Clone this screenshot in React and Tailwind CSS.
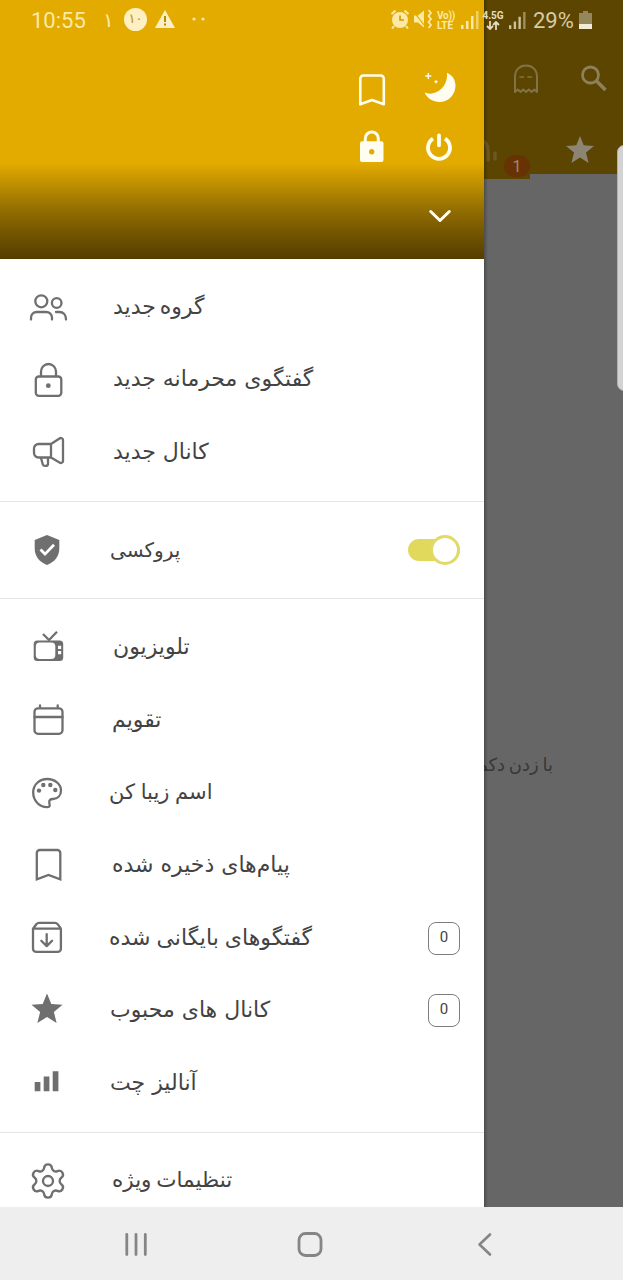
import React from "react";
import { Settings } from "lucide-react";

const STAR = "M19 2.500l4.300 10.400 11.200.8-8.600 7.300 2.700 10.900-9.600-5.900-9.600 5.900 2.700-10.900-8.600-7.300 11.200-.8z";

// All menu icons share the same 40x40 box
function Icon({ children, className = "", strokeWidth = 2.3 }) {
  return (
    <svg
      viewBox="0 0 40 40"
      className={`w-10 h-10 shrink-0 ${className}`}
      fill="none"
      stroke="currentColor"
      strokeWidth={strokeWidth}
      strokeLinecap="round"
      strokeLinejoin="round"
    >
      {children}
    </svg>
  );
}

const icons = {
  group: (
    <Icon>
      <circle cx="13.300" cy="14.300" r="6" />
      <circle cx="28.700" cy="16" r="4.800" />
      <path d="M3 32.500v-1.500c0-3.500 2.500-6 6-6h9c3.500 0 6 2.500 6 6v1.500M28 25h3.500c3.800 0 6.500 2.800 6.500 7.500" />
    </Icon>
  ),
  lock: (
    <Icon>
      <rect x="7.800" y="16.500" width="25.500" height="19.300" rx="3" />
      <path d="M13 16v-4.500a7.500 7.500 0 0 1 15 0V16" />
      <circle cx="20.300" cy="25.700" r="2.400" fill="currentColor" stroke="none" />
    </Icon>
  ),
  channel: (
    <Icon>
      <path d="M23 12H10.500a4.500 4.500 0 0 0-4.500 4.500v4.500a4.500 4.500 0 0 0 4.500 4.500H23zM23 12l8.500-5.500c1.500-1 3.500-.3 3.500 1.500v21c0 1.800-2 2.500-3.500 1.500L23 25.500M13 26l1.800 6.500c.6 2 4.900 2 5.200-.5V26" />
    </Icon>
  ),
  proxy: (
    <Icon>
      <path d="M19 5l12.300 5v8.500c0 8-5 13.700-12.300 16.500-7.300-2.800-12.300-8.500-12.300-16.500V10z" fill="currentColor" stroke="none" />
      <path d="M12.500 19.600l4.500 4.500 9-9.300" stroke="#fff" strokeWidth="2.800" strokeLinecap="butt" strokeLinejoin="miter" />
    </Icon>
  ),
  tv: (
    <Icon>
      <rect x="5.700" y="12.500" width="29.500" height="20.500" rx="3.500" fill="currentColor" stroke="none" />
      <rect x="7.800" y="14.500" width="19.500" height="16.500" rx="4" fill="#fff" stroke="none" />
      <path d="M15 6l6 6 8-8.300" strokeLinecap="butt" />
      <path d="M30 17.800h3.200v3.200H30zM30 23h3.200v3.200H30z" fill="#fff" stroke="none" />
    </Icon>
  ),
  calendar: (
    <Icon>
      <rect x="6.500" y="8.300" width="28" height="25.500" rx="3.500" />
      <path d="M6.500 17h28M12 7.500V5.500M29.700 7.500V5.500" />
    </Icon>
  ),
  palette: (
    <Icon>
      <path d="M21.300 33.500c-.4.500-1.300.7-2.300.7C11 34 5.200 27.300 5.200 19.500 5.200 11.500 11.500 6 19.300 6c7.500 0 13.700 5 13.700 11.500 0 5.500-3.500 8.300-8 8.500-2.800.1-4 1.200-3.700 3.500.2 1.500.8 3 0 4z" />
      <g fill="currentColor" stroke="none">
        <circle cx="11" cy="17.600" r="2.200" />
        <circle cx="15.300" cy="12" r="2.200" />
        <circle cx="22.300" cy="12" r="2.200" />
        <circle cx="27.300" cy="17" r="2.200" />
      </g>
    </Icon>
  ),
  bookmark: (
    <Icon>
      <path d="M8.800 34.300V8a3 3 0 0 1 3-3h17.500a3 3 0 0 1 3 3v26.300L20.500 30z" strokeLinejoin="miter" />
    </Icon>
  ),
  archive: (
    <Icon>
      <path d="M5 10.700v20a3.200 3.200 0 0 0 3.200 3.200h21.500a3.200 3.200 0 0 0 3.200-3.200v-20zM5 10.700l3.300-4.500c.8-1 1.500-1.400 2.700-1.400h16c1.200 0 1.900.4 2.700 1.400l3.200 4.500M18.700 16.200v11.500M13.300 22.700l5.400 5.400 5.400-5.400" />
    </Icon>
  ),
  star: (
    <Icon>
      <path d={STAR} fill="currentColor" stroke="none" />
    </Icon>
  ),
  stats: (
    <Icon>
      <path d="M6.700 19h5.700v9.300H6.700zM15.700 13.600h5.700v14.700h-5.700zM24.700 8.300h5.700v20h-5.700z" fill="currentColor" stroke="none" />
    </Icon>
  ),
  settings: <Settings size={40} strokeWidth={1.4} className="shrink-0" />,
};

const groups = [
  [
    { icon: "group", label: "گروه جدید", text: "ml-[45px] text-[22px] [word-spacing:-3px]" },
    { icon: "lock", label: "گفتگوی محرمانه جدید", text: "ml-[45px] text-[22px]" },
    { icon: "channel", label: "کانال جدید", text: "ml-[45px] text-[22px]" },
  ],
  [{ icon: "proxy", label: "پروکسی", text: "ml-[42px] text-[20px]", toggle: true }],
  [
    { icon: "tv", label: "تلویزیون", text: "ml-[45px] text-[22px]" },
    { icon: "calendar", label: "تقویم", text: "ml-[44px] text-[22px]" },
    { icon: "palette", label: "اسم زیبا کن", text: "ml-[41px] text-[21px] [word-spacing:-1px]" },
    { icon: "bookmark", label: "پیام‌های ذخیره شده", text: "ml-[44px] text-[22px]" },
    { icon: "archive", label: "گفتگوهای بایگانی شده", text: "ml-[41px] text-[22px] [word-spacing:-1px]", count: 0 },
    { icon: "star", label: "کانال های محبوب", text: "ml-[42px] text-[22px]", count: 0 },
    { icon: "stats", label: "آنالیز چت", text: "ml-[42px] text-[22px]" },
  ],
  [{ icon: "settings", label: "تنظیمات ویژه", text: "ml-[44px] text-[21.5px] [word-spacing:-2px]" }],
];

function MenuRow({ item }) {
  return (
    <div className="h-[72.6px] shrink-0 flex items-center pl-7 pr-6 text-[#6f6f6f]">
      {icons[item.icon]}
      <span dir="rtl" className={`leading-8 pb-px text-[#434343] whitespace-nowrap ${item.text}`}>
        {item.label}
      </span>
      {item.toggle && (
        <div className="ml-auto w-[52px] h-[22px] flex items-center justify-end rounded-full bg-[#e1d95c]">
          <div className="w-[30px] h-[30px] shrink-0 rounded-full bg-white border-3 border-[#e1da66]" />
        </div>
      )}
      {item.count !== undefined && (
        <div className="ml-auto w-8 h-[33px] pb-0.5 rounded-lg border-[1.5px] border-[#7d7d7d] flex items-center justify-center font-[Roboto] text-[15px] text-[#444]">
          {item.count}
        </div>
      )}
    </div>
  );
}

function DrawerHeader() {
  return (
    <div className="h-[259px] shrink-0 pt-[70px] pr-[25px] flex flex-col items-end text-[#fffdf0] bg-linear-to-b from-[#e3ab00] from-[63%] via-[#8f6b00] via-[82%] to-[#543d00]">
      <div className="grid grid-cols-2 gap-x-[27px] gap-y-[17px]">
        <Icon strokeWidth="2.600">
          <path d="M8.300 34.300V8.500a3 3 0 0 1 3-3h17.500a3 3 0 0 1 3 3v25.800L20 30z" />
        </Icon>
        <Icon>
          <path d="M28 2.700c5.200 2.300 8.500 7 8.500 12.800 0 9-7 16.500-16 16.500-6.500 0-12-3.500-15-9.500 2.500 1 5 1.500 7.500 1 10-1.700 16-11 15-20.800z" fill="currentColor" stroke="none" />
          <path d="M9.300 3.500v5M6.800 6h5M17 10.700v2M16 11.700h2" strokeWidth="1.400" />
        </Icon>
        <Icon strokeWidth="3">
          <path d="M13.300 15v-3.500a6.500 6.500 0 0 1 13 0V15" />
          <path fillRule="evenodd" d="M10 14.300h19.500a2 2 0 0 1 2 2V33a2 2 0 0 1-2 2H10a2 2 0 0 1-2-2V16.300a2 2 0 0 1 2-2zM19.700 22a2.800 2.800 0 1 0 .01 0z" fill="currentColor" stroke="none" />
        </Icon>
        <Icon strokeWidth="3.800">
          <path d="M14 11.600a11 11 0 1 0 12 0" strokeLinecap="butt" />
          <path d="M20 8.300v10" />
        </Icon>
      </div>
      <Icon className="mt-7" strokeWidth="3">
        <path d="M11.700 16.500l9.300 9 9.300-9" />
      </Icon>
    </div>
  );
}

function Drawer() {
  return (
    <aside className="w-[484px] h-full shrink-0 flex flex-col bg-white overflow-hidden">
      <DrawerHeader />
      {groups.map((group, i) => (
        <div key={i} className={`py-3 shrink-0 ${i > 0 ? "border-t border-[#e6e6e6]" : ""}`}>
          {group.map((item) => (
            <MenuRow key={item.label} item={item} />
          ))}
        </div>
      ))}
    </aside>
  );
}

// Dimmed chat list behind the drawer
function Backdrop() {
  return (
    <main className="relative flex-1 h-full overflow-hidden bg-[#666] flex flex-col">
      <div className="h-[174px] shrink-0 bg-[#5b4500] pt-[59px] text-[#827347]">
        <div className="flex pl-[22px] gap-[29px]">
          <Icon strokeWidth="2">
            <path d="M9 33V18c0-7 4.500-11.500 11-11.500S31 11 31 18v15l-2.700-2.500-2.800 2.500-2.700-2.500L20 33l-2.800-2.500-2.700 2.500-2.700-2.500z" />
            <path d="M14 18h3.500M22 18h3.500" strokeWidth="1.600" />
          </Icon>
          <Icon strokeWidth="2.800" className="text-[#8d805a]">
            <circle cx="15.500" cy="16" r="8" />
            <path d="M21.500 22l9 9" strokeWidth="3.500" strokeLinecap="butt" />
          </Icon>
        </div>
        <div className="flex items-center mt-[31px]">
          <svg viewBox="0 0 14 40" className="w-[14px] h-10" stroke="#6b5823" strokeWidth="3.500" strokeLinecap="round">
            <path d="M1 12q4 4 3 18M11 23v6" fill="none" />
          </svg>
          <Icon className="ml-[63px] text-[#8d8573]">
            <path d="M19 6l3.700 9.300 10.300.8-8 6.500 2.600 10.400L19 27.500 10.400 33 13 22.600 5 16.100l10.300-.8z" fill="currentColor" stroke="none" />
          </Icon>
        </div>
      </div>
      <div className="w-[46px] h-[5px] shrink-0 bg-[#5b4500]" />
      <p dir="rtl" className="mt-[570px] pr-[70px] text-[18px] leading-8 text-[#383838] whitespace-nowrap [word-spacing:-2px]">
        با زدن دکمه
      </p>
      <span className="absolute left-5 top-[155px] w-[26px] h-[22px] rounded-full bg-[#673304] text-[#a08a70] font-[Roboto] text-[16px] leading-[23px] text-center">
        1
      </span>
      <div className="absolute -right-2 top-[145px] w-[14px] h-[246px] rounded-lg bg-[#d3d3d3] border border-[#b5b0a4]" />
      <div className="absolute inset-y-0 left-0 w-1 bg-linear-to-r from-black/25 to-transparent" />
    </main>
  );
}

function Signal({ className }) {
  return (
    <svg viewBox="0 0 18 18" className={className} fill="currentColor">
      <path d="M0 14h2.500v4H0zM5 10h2.500v8H5zM10 5h2.500v13H10z" />
      <path d="M15 0h2.500v18H15z" opacity=".6" />
    </svg>
  );
}

function StatusBar() {
  return (
    <div className="absolute inset-x-0 top-0 h-10 flex items-center font-[Roboto] text-[#fbe9a6]">
      <span className="ml-[31px] w-[72px] text-[22px]">10:55</span>
      <span className="w-[22px] text-[20px] font-['DejaVu_Sans']">۱</span>
      <span className="w-[23px] h-[23px] -ml-px mb-0.5 rounded-full bg-[#fdf0c4] text-[#c29000] font-['DejaVu_Sans'] text-[13px] leading-[22px] text-center">
        ۱۰
      </span>
      <svg viewBox="0 0 20 18" className="ml-2 mb-0.5 w-5 h-[18px]">
        <path d="M10 0l10 18H0z" fill="#fdf0c4" />
        <path d="M10 6v6M10 13.500v2" stroke="#b98a00" strokeWidth="2" />
      </svg>
      <svg viewBox="0 0 14 4" className="ml-4 mb-0.5 w-[14px] h-1" fill="currentColor">
        <circle cx="3" cy="2" r="1.600" />
        <circle cx="12" cy="2" r="1.600" />
      </svg>

      <svg viewBox="0 0 20 20" className="ml-[185px] mb-0.5 w-5 h-5">
        <circle cx="10" cy="11" r="8" fill="currentColor" />
        <path d="M1.500 5l4-3.500M18.500 5l-4-3.500M4 17l-2 2.500M16 17l2 2.500" stroke="currentColor" strokeWidth="2" />
        <path d="M10 6.500V11h4" stroke="#d09d00" strokeWidth="1.600" fill="none" />
      </svg>
      <svg viewBox="0 0 20 20" className="ml-[3px] mb-0.5 w-5 h-5">
        <path d="M1 6.500h4l6-5v17l-6-5H1z" fill="currentColor" />
        <path d="M0 2l12 15" stroke="#e3ab00" strokeWidth="1.200" />
        <path d="M15.500 1l2.500 3-2.500 3 2.500 3-2.500 3 2.500 3-2.500 3" stroke="currentColor" strokeWidth="1.800" fill="none" />
      </svg>
      <div className="ml-1 w-[21px] flex flex-col text-[10px] font-bold">
        <span className="leading-[9px] h-[10px] tracking-[-0.2px]">Vo))</span>
        <span className="leading-[9px] h-[9px]">LTE</span>
      </div>
      <Signal className="w-[18px] h-[18px] ml-[3px]" />
      <span className="ml-1 w-5 flex flex-col items-center text-[10px] leading-[10px] font-bold text-[#e5dcc0]">
        4.5G
        <svg viewBox="0 0 14 9" className="w-[14px] h-[9px]" fill="none" stroke="currentColor" strokeWidth="1.800">
          <path d="M4 0v8M1 5l3 3 3-3M10 9V1M7 4l3-3 3 3" />
        </svg>
      </span>
      <Signal className="w-[17px] h-[17px] ml-[6px] text-[#cdc19a]" />
      <span className="ml-[7px] text-[22px] text-[#d6cba6]">29%</span>
      <svg viewBox="0 0 13 18" className="ml-[5px] mb-px w-[13px] h-[18px]">
        <path d="M4 0h5v2h4v11H0V2h4z" fill="#94875b" />
        <path d="M0 13h13v5H0z" fill="#f3ecd4" />
      </svg>
    </div>
  );
}

function NavBar() {
  return (
    <nav className="h-[73px] shrink-0 bg-[#eee] text-[#858585] flex items-center pl-[116px] gap-[134px]">
      <Icon strokeWidth="2.800">
        <path d="M10.800 10.500v20M20 10.500v20M29.300 10.500v20" />
      </Icon>
      <Icon strokeWidth="2.800">
        <rect x="9" y="9.500" width="22" height="22" rx="6.500" />
      </Icon>
      <Icon strokeWidth="2.600">
        <path d="M26 10.500L15.500 20.500l10.500 10" />
      </Icon>
    </nav>
  );
}

export default function App() {
  return (
    <div className="relative w-[623px] h-[1280px] flex flex-col overflow-hidden font-['DejaVu_Sans',sans-serif]">
      <div className="h-[1207px] flex">
        <Drawer />
        <Backdrop />
      </div>
      <NavBar />
      <StatusBar />
    </div>
  );
}
